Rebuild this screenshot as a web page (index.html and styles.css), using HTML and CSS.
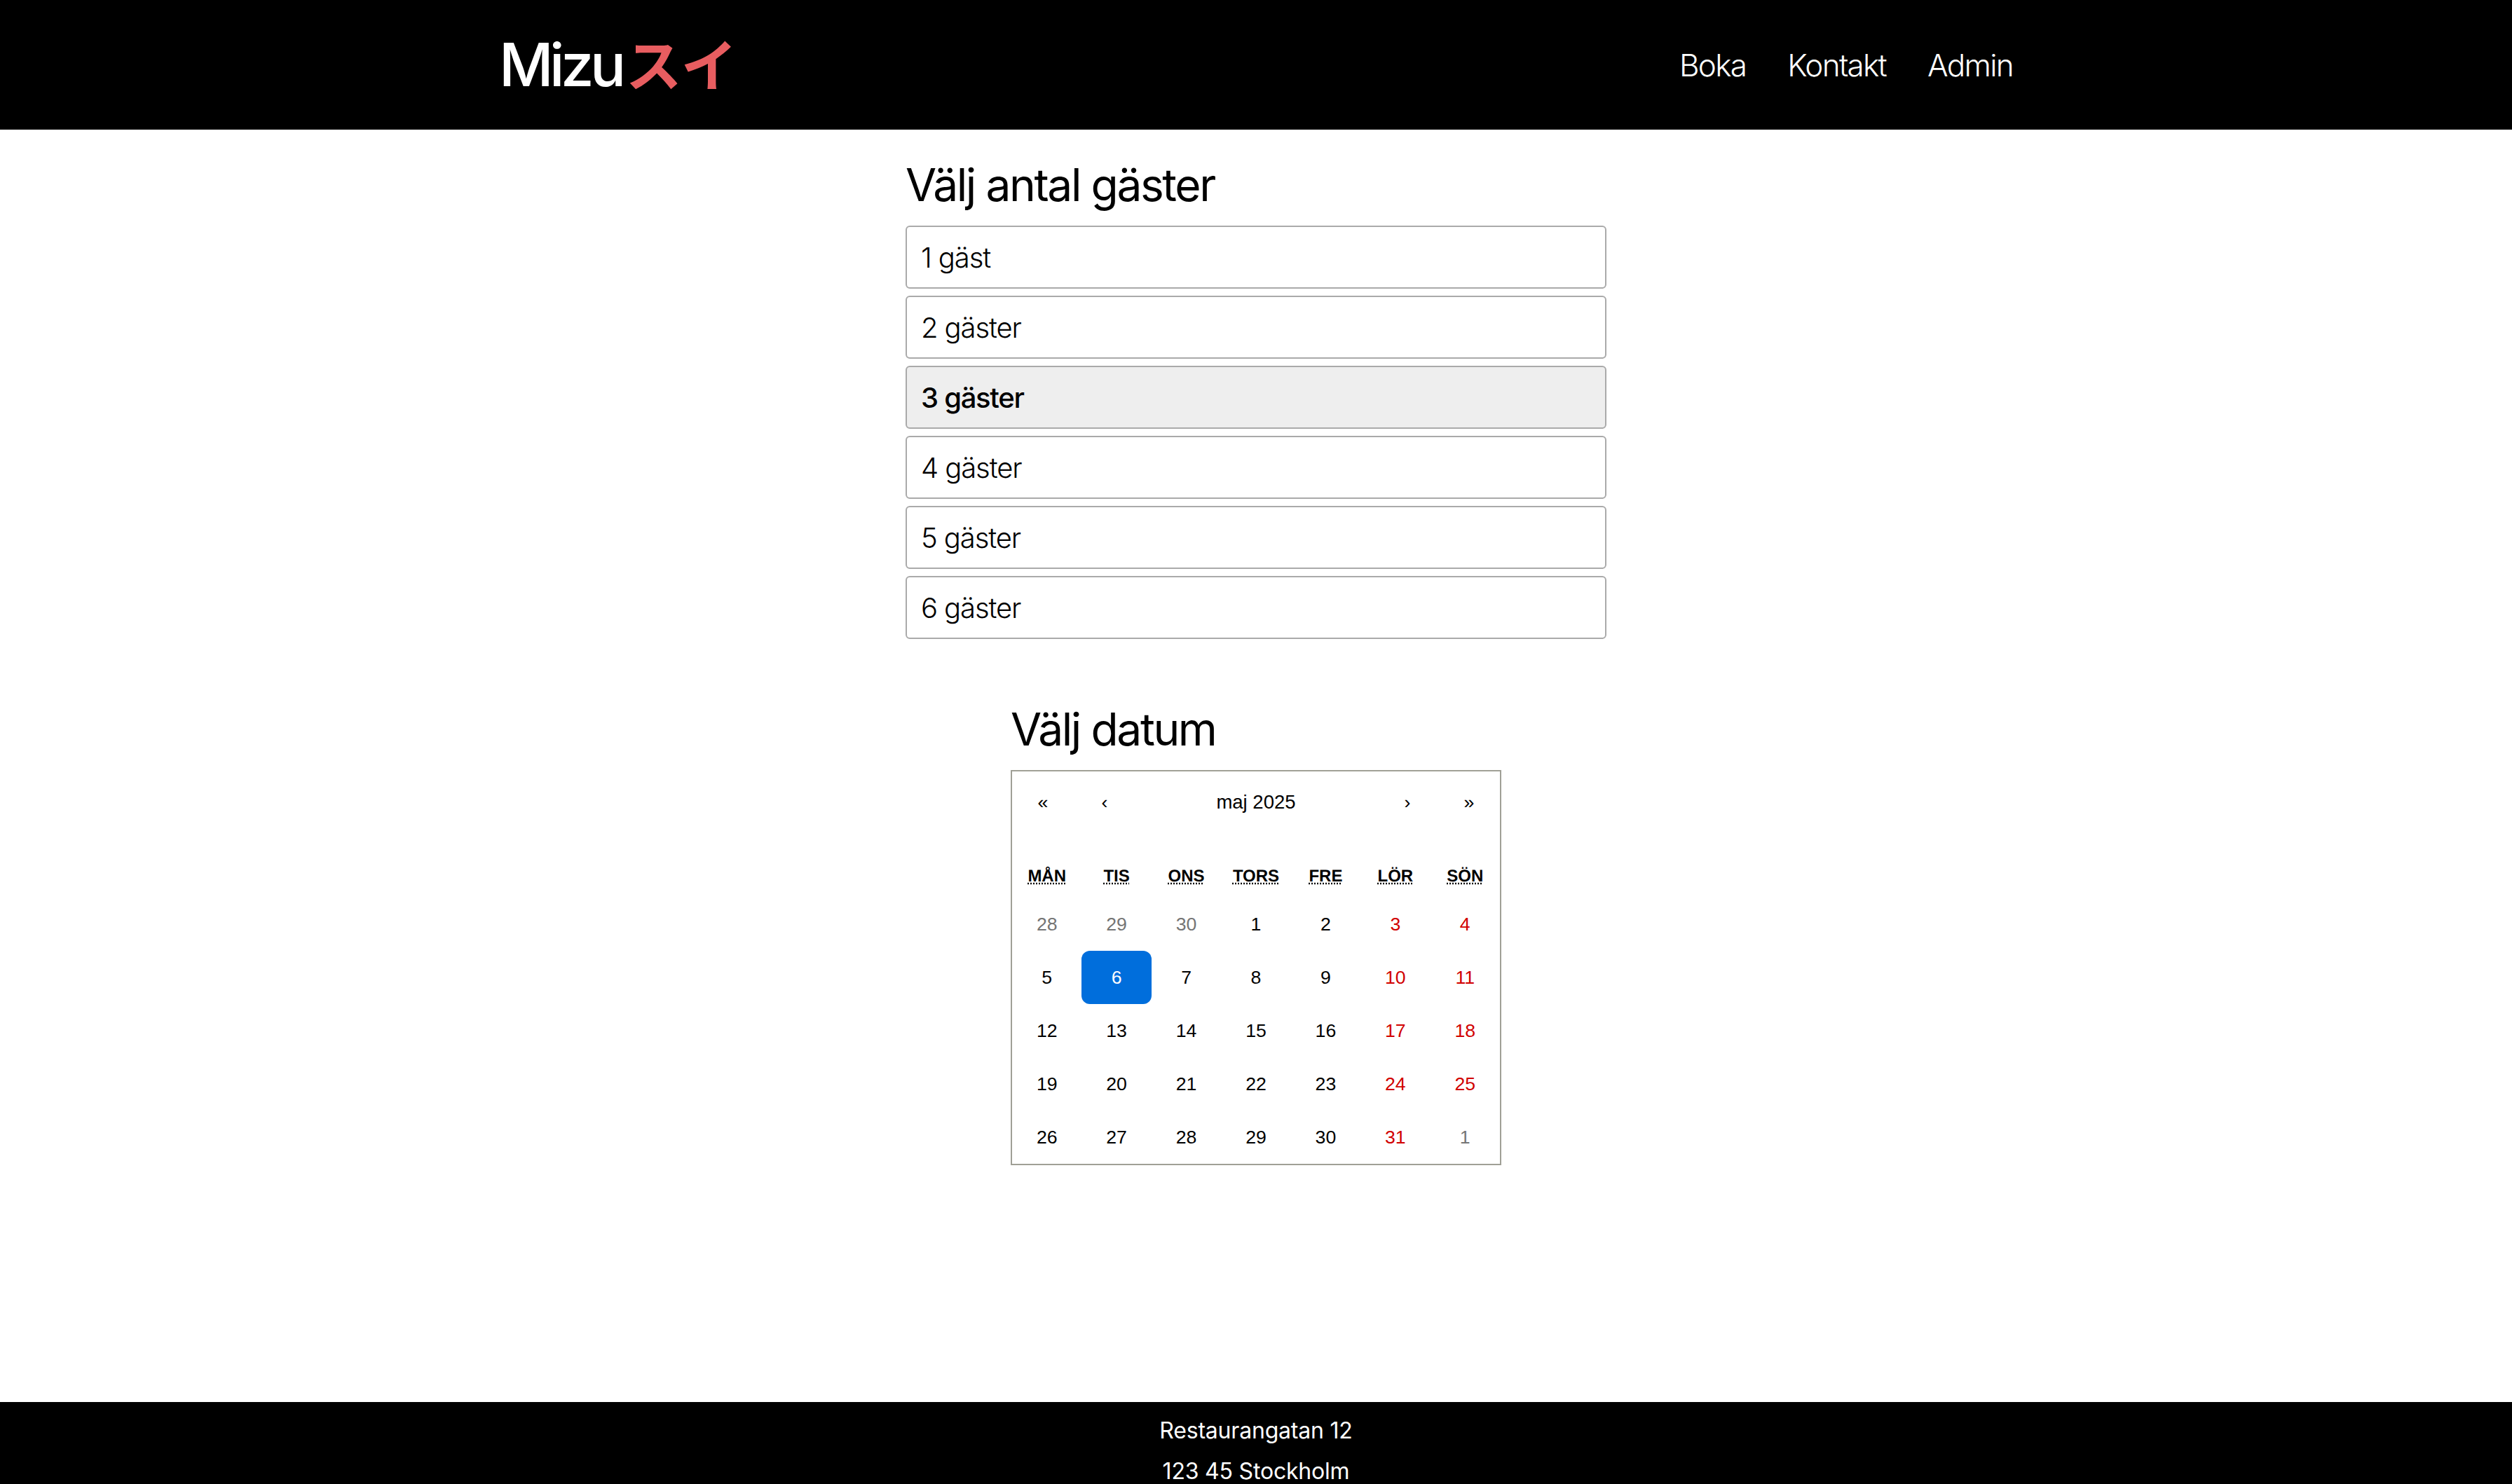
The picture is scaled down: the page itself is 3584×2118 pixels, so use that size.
FILE: index.html
```html
<!DOCTYPE html>
<html lang="sv">
<head>
  <meta charset="UTF-8" />
  <title>Mizuスイ</title>
  <link rel="stylesheet" href="styles.css">
</head>
<body>
  <header class="site-header">
    <div class="header-inner">
      <a class="logo" href="#">Mizu<span class="logo-kana">スイ</span></a>
      <nav class="nav">
        <a href="#">Boka</a>
        <a href="#">Kontakt</a>
        <a href="#">Admin</a>
      </nav>
    </div>
  </header>

  <main class="main">
    <section class="guests">
      <h2>Välj antal gäster</h2>
      <button class="guest-option">1 gäst</button>
      <button class="guest-option">2 gäster</button>
      <button class="guest-option selected">3 gäster</button>
      <button class="guest-option">4 gäster</button>
      <button class="guest-option">5 gäster</button>
      <button class="guest-option">6 gäster</button>
    </section>

    <section class="date">
      <h2>Välj datum</h2>
      <div class="calendar">
        <div class="cal-nav">
          <button>«</button>
          <button>‹</button>
          <button class="cal-label">maj 2025</button>
          <button>›</button>
          <button>»</button>
        </div>
        <div class="cal-weekdays">
          <abbr title="måndag">Mån</abbr>
          <abbr title="tisdag">Tis</abbr>
          <abbr title="onsdag">Ons</abbr>
          <abbr title="torsdag">Tors</abbr>
          <abbr title="fredag">Fre</abbr>
          <abbr title="lördag">Lör</abbr>
          <abbr title="söndag">Sön</abbr>
        </div>
        <div class="cal-days">
          <button class="other">28</button>
          <button class="other">29</button>
          <button class="other">30</button>
          <button>1</button>
          <button>2</button>
          <button class="weekend">3</button>
          <button class="weekend">4</button>

          <button>5</button>
          <button class="active">6</button>
          <button>7</button>
          <button>8</button>
          <button>9</button>
          <button class="weekend">10</button>
          <button class="weekend">11</button>

          <button>12</button>
          <button>13</button>
          <button>14</button>
          <button>15</button>
          <button>16</button>
          <button class="weekend">17</button>
          <button class="weekend">18</button>

          <button>19</button>
          <button>20</button>
          <button>21</button>
          <button>22</button>
          <button>23</button>
          <button class="weekend">24</button>
          <button class="weekend">25</button>

          <button>26</button>
          <button>27</button>
          <button>28</button>
          <button>29</button>
          <button>30</button>
          <button class="weekend">31</button>
          <button class="other">1</button>
        </div>
      </div>
    </section>
  </main>

  <footer class="site-footer">
    <p>Restaurangatan 12</p>
    <p>123 45 Stockholm</p>
  </footer>
</body>
</html>
```

FILE: styles.css
```css
html,
body {
  height: 100%;
}
body {
  margin: 0;
  overflow: hidden;
  font-family: Inter, "Noto Sans CJK JP", sans-serif;
  color: #000;
  background: #fff;
}
a {
  color: inherit;
  text-decoration: none;
}
button {
  font: inherit;
  color: inherit;
  background: none;
  border: 0;
  padding: 0;
}

.site-header {
  background: #000;
  color: #fff;
  height: 185px;
}
.header-inner {
  width: 2160px;
  height: 100%;
  margin: 0 auto;
  display: flex;
  align-items: center;
  justify-content: space-between;
}
.logo {
  font-size: 85px;
  font-weight: 500;
  line-height: 1;
  letter-spacing: -5.5px;
}
.logo-kana {
  margin-left: 5px;
  color: #e85d60;
  font-size: 80px;
  font-weight: 700;
  letter-spacing: -1px;
}
.nav {
  display: flex;
  gap: 59px;
  font-size: 44px;
  font-weight: 300;
  letter-spacing: -1.7px;
}

.main {
  height: 1816px;
  box-sizing: border-box;
  padding-top: 40px;
  display: flex;
  flex-direction: column;
  align-items: center;
}
h2 {
  margin: 0 0 20px;
  font-size: 64px;
  font-weight: 400;
  letter-spacing: -2.4px;
}
.guests {
  width: 1000px;
}
.guest-option {
  display: block;
  width: 100%;
  height: 90px;
  margin-bottom: 10px;
  padding: 0 20px;
  box-sizing: border-box;
  border: 2px solid #aaa;
  border-radius: 6px;
  background: #fff;
  font-size: 40px;
  font-weight: 300;
  letter-spacing: -1.1px;
  text-align: left;
}
.guest-option.selected {
  background: #eee;
  font-weight: 550;
  letter-spacing: -1.3px;
}

.date {
  width: 700px;
  margin-top: 80px;
}
.calendar {
  box-sizing: border-box;
  border: 2px solid #a0a096;
  font-family: "Liberation Sans", Arial, sans-serif;
  font-size: 26.67px;
  text-rendering: geometricPrecision;
}
.cal-nav {
  display: flex;
  height: 88px;
  margin-bottom: 32px;
}
.cal-nav button {
  min-width: 88px;
}
.cal-nav .cal-label {
  flex: 1;
  font-size: 27.5px;
}
.cal-weekdays,
.cal-days {
  display: grid;
  grid-template-columns: repeat(7, 1fr);
}
.cal-weekdays {
  height: 60px;
  align-items: center;
  justify-items: center;
  font-size: 24px;
  font-weight: bold;
  text-transform: uppercase;
}
.cal-days button {
  height: 76px;
}
.cal-days .other {
  color: #757575;
}
.cal-days .weekend {
  color: #d10000;
}
.cal-days .active {
  background: #006edc;
  color: #fff;
  border-radius: 12px;
}

.site-footer {
  background: #000;
  color: #fff;
  padding-top: 12px;
  text-align: center;
  font-size: 32px;
  letter-spacing: -0.2px;
  line-height: 58px;
}
.site-footer p {
  margin: 0;
}
```
